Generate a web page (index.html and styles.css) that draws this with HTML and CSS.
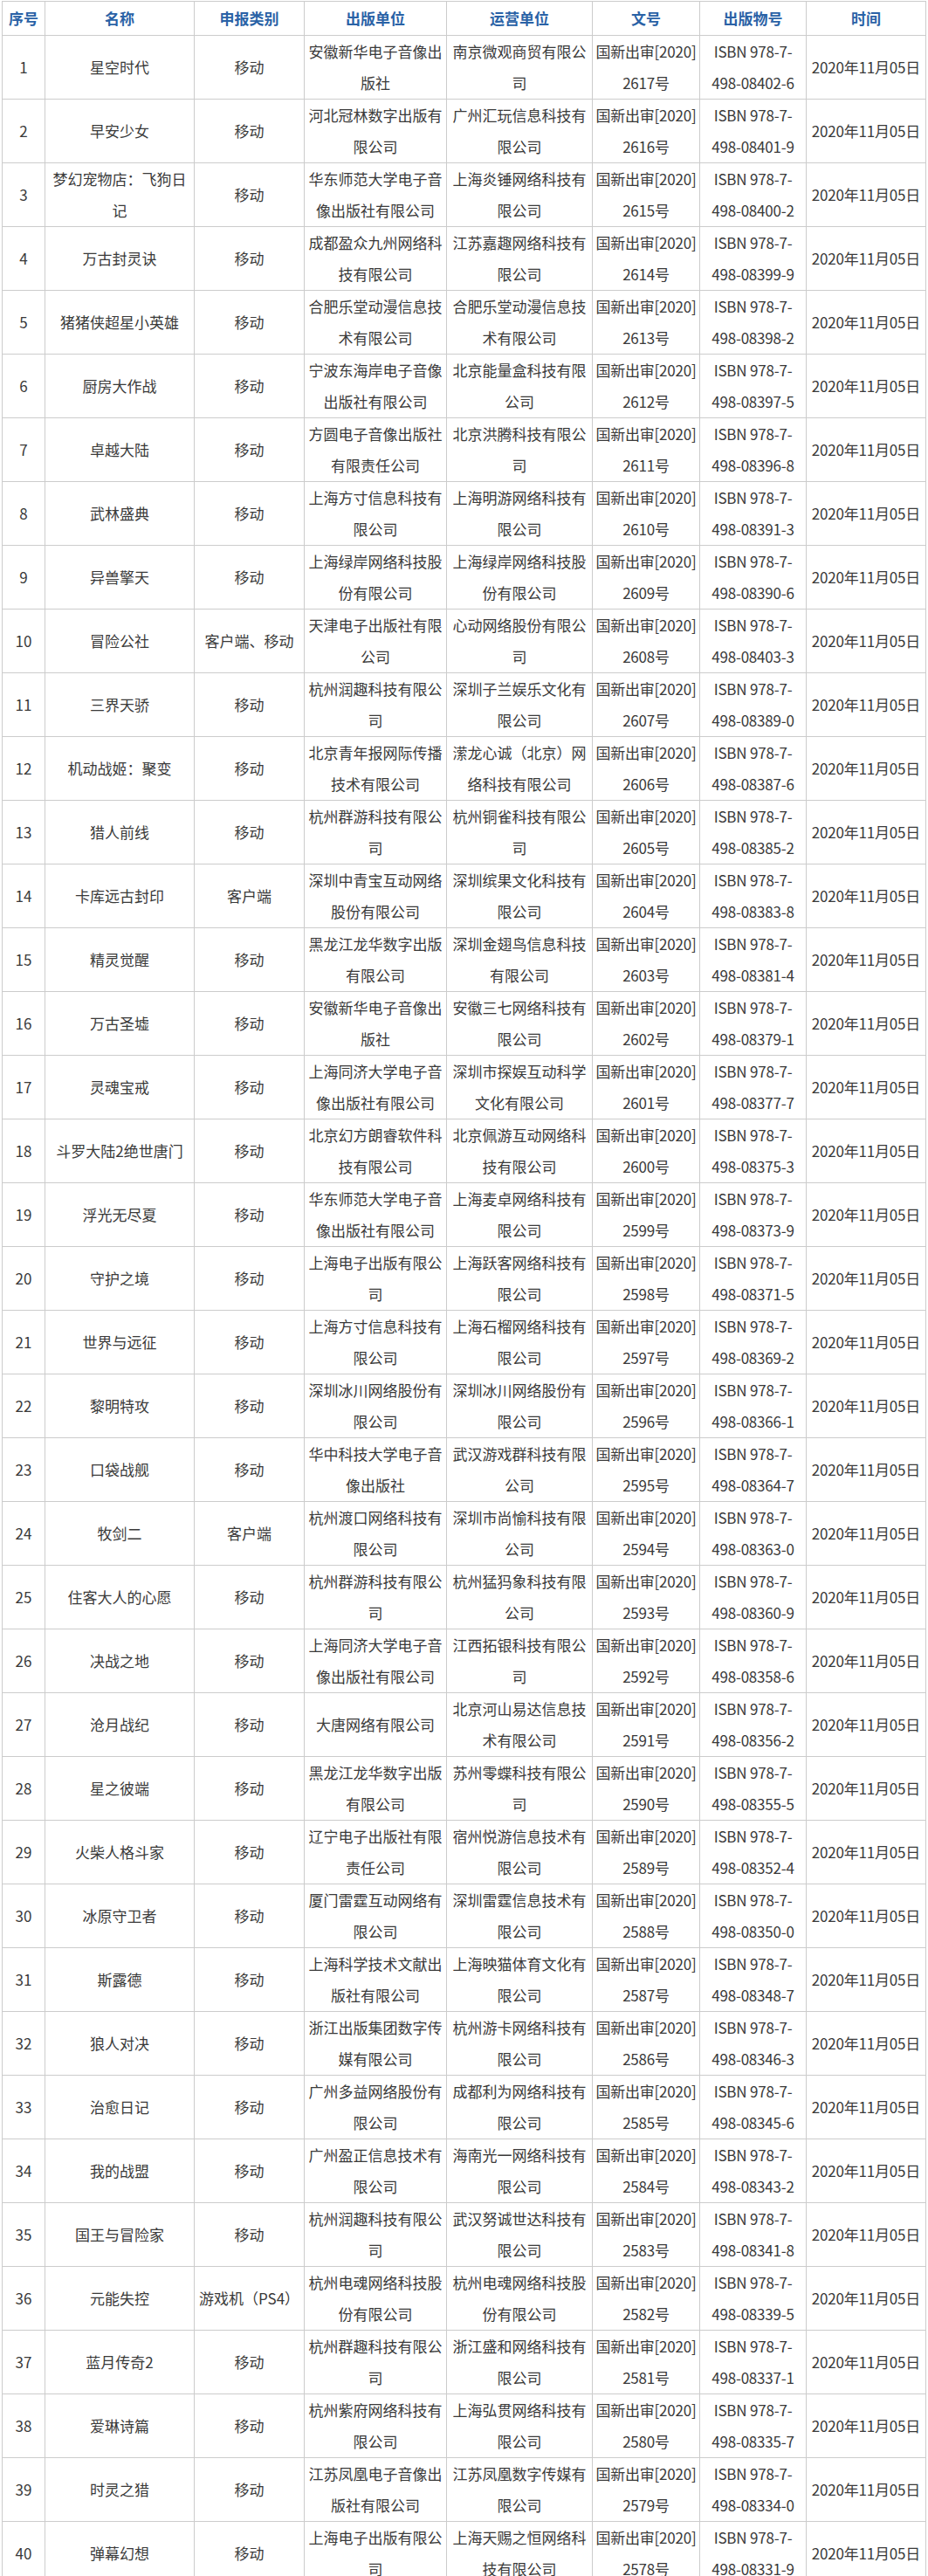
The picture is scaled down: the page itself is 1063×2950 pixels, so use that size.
FILE: index.html
```html
<!DOCTYPE html>
<html lang="zh-CN">
<head>
<meta charset="utf-8">
<title>游戏审批信息</title>
<link rel="stylesheet" href="styles.css">
</head>
<body>
<table class="list">
<colgroup>
<col class="c-no"><col class="c-name"><col class="c-type"><col class="c-pub"><col class="c-op"><col class="c-doc"><col class="c-isbn"><col class="c-date">
</colgroup>
<thead>
<tr><th>序号</th><th>名称</th><th>申报类别</th><th>出版单位</th><th>运营单位</th><th>文号</th><th>出版物号</th><th>时间</th></tr>
</thead>
<tbody>
<tr><td>1</td><td>星空时代</td><td>移动</td><td>安徽新华电子音像出版社</td><td>南京微观商贸有限公司</td><td class="nw">国新出审[2020]<br>2617号</td><td class="nw">ISBN 978-7-<br>498-08402-6</td><td class="nw">2020年11月05日</td></tr>
<tr><td>2</td><td>早安少女</td><td>移动</td><td>河北冠林数字出版有限公司</td><td>广州汇玩信息科技有限公司</td><td class="nw">国新出审[2020]<br>2616号</td><td class="nw">ISBN 978-7-<br>498-08401-9</td><td class="nw">2020年11月05日</td></tr>
<tr><td>3</td><td>梦幻宠物店：飞狗日记</td><td>移动</td><td>华东师范大学电子音像出版社有限公司</td><td>上海炎锤网络科技有限公司</td><td class="nw">国新出审[2020]<br>2615号</td><td class="nw">ISBN 978-7-<br>498-08400-2</td><td class="nw">2020年11月05日</td></tr>
<tr><td>4</td><td>万古封灵诀</td><td>移动</td><td>成都盈众九州网络科技有限公司</td><td>江苏嘉趣网络科技有限公司</td><td class="nw">国新出审[2020]<br>2614号</td><td class="nw">ISBN 978-7-<br>498-08399-9</td><td class="nw">2020年11月05日</td></tr>
<tr><td>5</td><td>猪猪侠超星小英雄</td><td>移动</td><td>合肥乐堂动漫信息技术有限公司</td><td>合肥乐堂动漫信息技术有限公司</td><td class="nw">国新出审[2020]<br>2613号</td><td class="nw">ISBN 978-7-<br>498-08398-2</td><td class="nw">2020年11月05日</td></tr>
<tr><td>6</td><td>厨房大作战</td><td>移动</td><td>宁波东海岸电子音像出版社有限公司</td><td>北京能量盒科技有限公司</td><td class="nw">国新出审[2020]<br>2612号</td><td class="nw">ISBN 978-7-<br>498-08397-5</td><td class="nw">2020年11月05日</td></tr>
<tr><td>7</td><td>卓越大陆</td><td>移动</td><td>方圆电子音像出版社有限责任公司</td><td>北京洪腾科技有限公司</td><td class="nw">国新出审[2020]<br>2611号</td><td class="nw">ISBN 978-7-<br>498-08396-8</td><td class="nw">2020年11月05日</td></tr>
<tr><td>8</td><td>武林盛典</td><td>移动</td><td>上海方寸信息科技有限公司</td><td>上海明游网络科技有限公司</td><td class="nw">国新出审[2020]<br>2610号</td><td class="nw">ISBN 978-7-<br>498-08391-3</td><td class="nw">2020年11月05日</td></tr>
<tr><td>9</td><td>异兽擎天</td><td>移动</td><td>上海绿岸网络科技股份有限公司</td><td>上海绿岸网络科技股份有限公司</td><td class="nw">国新出审[2020]<br>2609号</td><td class="nw">ISBN 978-7-<br>498-08390-6</td><td class="nw">2020年11月05日</td></tr>
<tr><td>10</td><td>冒险公社</td><td>客户端、移动</td><td>天津电子出版社有限公司</td><td>心动网络股份有限公司</td><td class="nw">国新出审[2020]<br>2608号</td><td class="nw">ISBN 978-7-<br>498-08403-3</td><td class="nw">2020年11月05日</td></tr>
<tr><td>11</td><td>三界天骄</td><td>移动</td><td>杭州润趣科技有限公司</td><td>深圳子兰娱乐文化有限公司</td><td class="nw">国新出审[2020]<br>2607号</td><td class="nw">ISBN 978-7-<br>498-08389-0</td><td class="nw">2020年11月05日</td></tr>
<tr><td>12</td><td>机动战姬：聚变</td><td>移动</td><td>北京青年报网际传播技术有限公司</td><td>潆龙心诚（北京）网络科技有限公司</td><td class="nw">国新出审[2020]<br>2606号</td><td class="nw">ISBN 978-7-<br>498-08387-6</td><td class="nw">2020年11月05日</td></tr>
<tr><td>13</td><td>猎人前线</td><td>移动</td><td>杭州群游科技有限公司</td><td>杭州铜雀科技有限公司</td><td class="nw">国新出审[2020]<br>2605号</td><td class="nw">ISBN 978-7-<br>498-08385-2</td><td class="nw">2020年11月05日</td></tr>
<tr><td>14</td><td>卡库远古封印</td><td>客户端</td><td>深圳中青宝互动网络股份有限公司</td><td>深圳缤果文化科技有限公司</td><td class="nw">国新出审[2020]<br>2604号</td><td class="nw">ISBN 978-7-<br>498-08383-8</td><td class="nw">2020年11月05日</td></tr>
<tr><td>15</td><td>精灵觉醒</td><td>移动</td><td>黑龙江龙华数字出版有限公司</td><td>深圳金翅鸟信息科技有限公司</td><td class="nw">国新出审[2020]<br>2603号</td><td class="nw">ISBN 978-7-<br>498-08381-4</td><td class="nw">2020年11月05日</td></tr>
<tr><td>16</td><td>万古圣墟</td><td>移动</td><td>安徽新华电子音像出版社</td><td>安徽三七网络科技有限公司</td><td class="nw">国新出审[2020]<br>2602号</td><td class="nw">ISBN 978-7-<br>498-08379-1</td><td class="nw">2020年11月05日</td></tr>
<tr><td>17</td><td>灵魂宝戒</td><td>移动</td><td>上海同济大学电子音像出版社有限公司</td><td>深圳市探娱互动科学文化有限公司</td><td class="nw">国新出审[2020]<br>2601号</td><td class="nw">ISBN 978-7-<br>498-08377-7</td><td class="nw">2020年11月05日</td></tr>
<tr><td>18</td><td>斗罗大陆2绝世唐门</td><td>移动</td><td>北京幻方朗睿软件科技有限公司</td><td>北京佩游互动网络科技有限公司</td><td class="nw">国新出审[2020]<br>2600号</td><td class="nw">ISBN 978-7-<br>498-08375-3</td><td class="nw">2020年11月05日</td></tr>
<tr><td>19</td><td>浮光无尽夏</td><td>移动</td><td>华东师范大学电子音像出版社有限公司</td><td>上海麦卓网络科技有限公司</td><td class="nw">国新出审[2020]<br>2599号</td><td class="nw">ISBN 978-7-<br>498-08373-9</td><td class="nw">2020年11月05日</td></tr>
<tr><td>20</td><td>守护之境</td><td>移动</td><td>上海电子出版有限公司</td><td>上海跃客网络科技有限公司</td><td class="nw">国新出审[2020]<br>2598号</td><td class="nw">ISBN 978-7-<br>498-08371-5</td><td class="nw">2020年11月05日</td></tr>
<tr><td>21</td><td>世界与远征</td><td>移动</td><td>上海方寸信息科技有限公司</td><td>上海石榴网络科技有限公司</td><td class="nw">国新出审[2020]<br>2597号</td><td class="nw">ISBN 978-7-<br>498-08369-2</td><td class="nw">2020年11月05日</td></tr>
<tr><td>22</td><td>黎明特攻</td><td>移动</td><td>深圳冰川网络股份有限公司</td><td>深圳冰川网络股份有限公司</td><td class="nw">国新出审[2020]<br>2596号</td><td class="nw">ISBN 978-7-<br>498-08366-1</td><td class="nw">2020年11月05日</td></tr>
<tr><td>23</td><td>口袋战舰</td><td>移动</td><td>华中科技大学电子音像出版社</td><td>武汉游戏群科技有限公司</td><td class="nw">国新出审[2020]<br>2595号</td><td class="nw">ISBN 978-7-<br>498-08364-7</td><td class="nw">2020年11月05日</td></tr>
<tr><td>24</td><td>牧剑二</td><td>客户端</td><td>杭州渡口网络科技有限公司</td><td>深圳市尚愉科技有限公司</td><td class="nw">国新出审[2020]<br>2594号</td><td class="nw">ISBN 978-7-<br>498-08363-0</td><td class="nw">2020年11月05日</td></tr>
<tr><td>25</td><td>住客大人的心愿</td><td>移动</td><td>杭州群游科技有限公司</td><td>杭州猛犸象科技有限公司</td><td class="nw">国新出审[2020]<br>2593号</td><td class="nw">ISBN 978-7-<br>498-08360-9</td><td class="nw">2020年11月05日</td></tr>
<tr><td>26</td><td>决战之地</td><td>移动</td><td>上海同济大学电子音像出版社有限公司</td><td>江西拓银科技有限公司</td><td class="nw">国新出审[2020]<br>2592号</td><td class="nw">ISBN 978-7-<br>498-08358-6</td><td class="nw">2020年11月05日</td></tr>
<tr><td>27</td><td>沧月战纪</td><td>移动</td><td>大唐网络有限公司</td><td>北京河山易达信息技术有限公司</td><td class="nw">国新出审[2020]<br>2591号</td><td class="nw">ISBN 978-7-<br>498-08356-2</td><td class="nw">2020年11月05日</td></tr>
<tr><td>28</td><td>星之彼端</td><td>移动</td><td>黑龙江龙华数字出版有限公司</td><td>苏州零蝶科技有限公司</td><td class="nw">国新出审[2020]<br>2590号</td><td class="nw">ISBN 978-7-<br>498-08355-5</td><td class="nw">2020年11月05日</td></tr>
<tr><td>29</td><td>火柴人格斗家</td><td>移动</td><td>辽宁电子出版社有限责任公司</td><td>宿州悦游信息技术有限公司</td><td class="nw">国新出审[2020]<br>2589号</td><td class="nw">ISBN 978-7-<br>498-08352-4</td><td class="nw">2020年11月05日</td></tr>
<tr><td>30</td><td>冰原守卫者</td><td>移动</td><td>厦门雷霆互动网络有限公司</td><td>深圳雷霆信息技术有限公司</td><td class="nw">国新出审[2020]<br>2588号</td><td class="nw">ISBN 978-7-<br>498-08350-0</td><td class="nw">2020年11月05日</td></tr>
<tr><td>31</td><td>斯露德</td><td>移动</td><td>上海科学技术文献出版社有限公司</td><td>上海映猫体育文化有限公司</td><td class="nw">国新出审[2020]<br>2587号</td><td class="nw">ISBN 978-7-<br>498-08348-7</td><td class="nw">2020年11月05日</td></tr>
<tr><td>32</td><td>狼人对决</td><td>移动</td><td>浙江出版集团数字传媒有限公司</td><td>杭州游卡网络科技有限公司</td><td class="nw">国新出审[2020]<br>2586号</td><td class="nw">ISBN 978-7-<br>498-08346-3</td><td class="nw">2020年11月05日</td></tr>
<tr><td>33</td><td>治愈日记</td><td>移动</td><td>广州多益网络股份有限公司</td><td>成都利为网络科技有限公司</td><td class="nw">国新出审[2020]<br>2585号</td><td class="nw">ISBN 978-7-<br>498-08345-6</td><td class="nw">2020年11月05日</td></tr>
<tr><td>34</td><td>我的战盟</td><td>移动</td><td>广州盈正信息技术有限公司</td><td>海南光一网络科技有限公司</td><td class="nw">国新出审[2020]<br>2584号</td><td class="nw">ISBN 978-7-<br>498-08343-2</td><td class="nw">2020年11月05日</td></tr>
<tr><td>35</td><td>国王与冒险家</td><td>移动</td><td>杭州润趣科技有限公司</td><td>武汉努诚世达科技有限公司</td><td class="nw">国新出审[2020]<br>2583号</td><td class="nw">ISBN 978-7-<br>498-08341-8</td><td class="nw">2020年11月05日</td></tr>
<tr><td>36</td><td>元能失控</td><td>游戏机（PS4）</td><td>杭州电魂网络科技股份有限公司</td><td>杭州电魂网络科技股份有限公司</td><td class="nw">国新出审[2020]<br>2582号</td><td class="nw">ISBN 978-7-<br>498-08339-5</td><td class="nw">2020年11月05日</td></tr>
<tr><td>37</td><td>蓝月传奇2</td><td>移动</td><td>杭州群趣科技有限公司</td><td>浙江盛和网络科技有限公司</td><td class="nw">国新出审[2020]<br>2581号</td><td class="nw">ISBN 978-7-<br>498-08337-1</td><td class="nw">2020年11月05日</td></tr>
<tr><td>38</td><td>爱琳诗篇</td><td>移动</td><td>杭州紫府网络科技有限公司</td><td>上海弘贯网络科技有限公司</td><td class="nw">国新出审[2020]<br>2580号</td><td class="nw">ISBN 978-7-<br>498-08335-7</td><td class="nw">2020年11月05日</td></tr>
<tr><td>39</td><td>时灵之猎</td><td>移动</td><td>江苏凤凰电子音像出版社有限公司</td><td>江苏凤凰数字传媒有限公司</td><td class="nw">国新出审[2020]<br>2579号</td><td class="nw">ISBN 978-7-<br>498-08334-0</td><td class="nw">2020年11月05日</td></tr>
<tr><td>40</td><td>弹幕幻想</td><td>移动</td><td>上海电子出版有限公司</td><td>上海天赐之恒网络科技有限公司</td><td class="nw">国新出审[2020]<br>2578号</td><td class="nw">ISBN 978-7-<br>498-08331-9</td><td class="nw">2020年11月05日</td></tr>
</tbody>
</table>
</body>
</html>
```

FILE: styles.css
```css
html, body {
  margin: 0;
  padding: 0;
  background: #ffffff;
}

body {
  font-family: "Noto Sans CJK SC", "Noto Sans", sans-serif;
  color: #3a3a3a;
}

.list {
  border-collapse: collapse;
  table-layout: fixed;
  width: 1059px;
  margin: 1px 0 0 2px;
  font-size: 17px;
}

.c-no { width: 49px; }
.c-name { width: 171px; }
.c-type { width: 126px; }
.c-pub { width: 163px; }
.c-op { width: 167px; }
.c-doc { width: 123px; }
.c-isbn { width: 122px; }
.c-date { width: 137px; }

.list th,
.list td {
  border: 1px solid #cccccc;
  padding: 0 2px;
  text-align: center;
  vertical-align: middle;
}

.list th {
  height: 38px;
  line-height: 38px;
  font-weight: bold;
  color: #2a62a6;
}

.list td {
  height: 72px;
  line-height: 36px;
}

.list td.nw {
  white-space: nowrap;
  padding: 0;
  letter-spacing: -0.2px;
}
```
